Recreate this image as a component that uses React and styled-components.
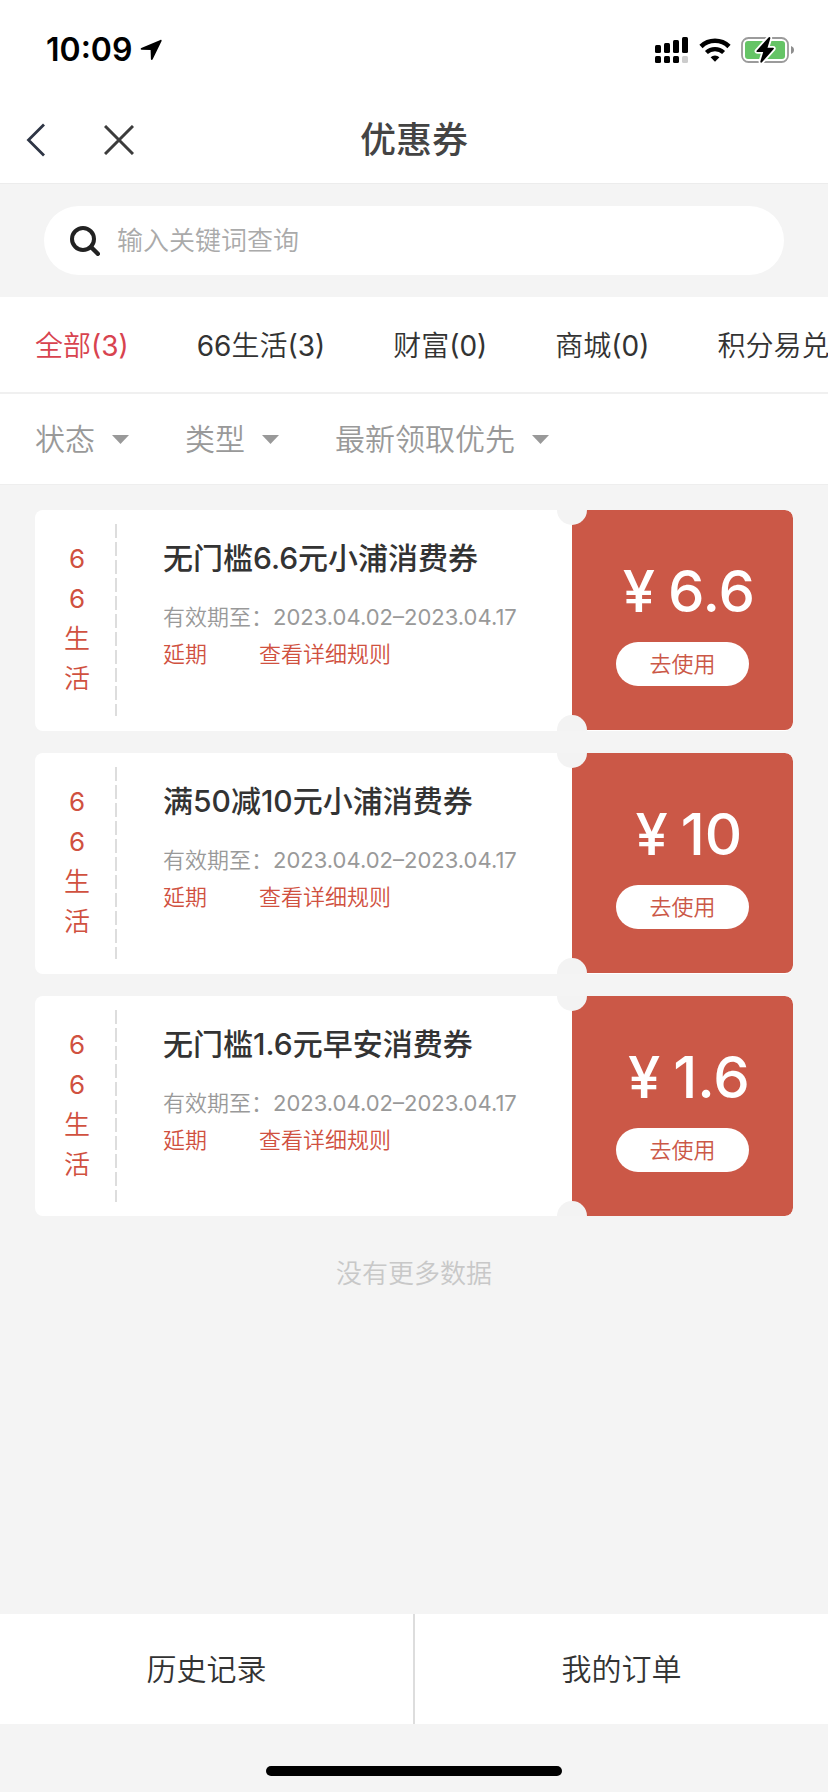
import React from "react";
import styled, { createGlobalStyle } from "styled-components";

const GlobalStyle = createGlobalStyle`
    * {
        box-sizing: border-box;
    }
    body {
        margin: 0;
        background: #f4f4f4;
        color: #333;
        font-family: Inter, "Noto Sans CJK SC DemiLight", "Noto Sans CJK SC", sans-serif;
    }
    button,
    input,
    select {
        margin: 0;
        padding: 0;
        border: 0;
        background: none;
        color: inherit;
        font: inherit;
    }
    button {
        cursor: pointer;
    }
    svg {
        display: block;
        flex: none;
    }
`;

const tabs = ["全部(3)", "66生活(3)", "财富(0)", "商城(0)", "积分易兑"];

const filters = [
    { name: "status", label: "状态" },
    { name: "type", label: "类型" },
    { name: "sort", label: "最新领取优先" },
];

const coupons = [
    { id: 1, title: "无门槛6.6元小浦消费券", amount: "6.6" },
    { id: 2, title: "满50减10元小浦消费券", amount: "10" },
    { id: 3, title: "无门槛1.6元早安消费券", amount: "1.6" },
];

const LocationIcon = () => (
    <svg width="22" height="22" viewBox="0 0 22 22" aria-hidden="true">
        <path
            d="M20.4.9 1.3 9.1c-1 .5-.8 1.6.3 1.7l9 .3.3 9c.1 1.1 1.4 1.2 1.8.2L21.6 2.1c.3-.8-.4-1.5-1.2-1.2z"
            fill="#000"
        />
    </svg>
);

const SignalIcon = () => (
    <svg width="34" height="26" viewBox="0 0 34 26" aria-hidden="true">
        <rect x="0" y="8" width="6" height="8" rx="1.5" />
        <rect x="9" y="6" width="6" height="10" rx="1.5" />
        <rect x="18" y="3" width="6" height="13" rx="1.5" />
        <rect x="27" y="0" width="6" height="16" rx="1.5" />
        <rect x="0" y="19" width="6" height="7" rx="1.5" />
        <rect x="9" y="19" width="6" height="7" rx="1.5" />
        <rect x="18" y="19" width="6" height="7" rx="1.5" />
        <rect x="27" y="19" width="6" height="7" rx="1.5" fill="#ccc" />
    </svg>
);

const WifiIcon = () => (
    <svg width="32" height="24" viewBox="0 0 32 24" aria-hidden="true">
        <path d="M2 8.5a20 20 0 0 1 28 0" fill="none" stroke="#000" strokeWidth="4.6" />
        <path d="M7.4 14.6a12.4 12.4 0 0 1 17.2 0" fill="none" stroke="#000" strokeWidth="4.2" />
        <path d="M11.6 19.3a6.5 6.5 0 0 1 8.8 0L16 23.7z" />
    </svg>
);

const BatteryIcon = () => (
    <svg width="54" height="28" viewBox="0 0 54 28" aria-hidden="true">
        <rect x="1" y="2" width="46" height="24" rx="6.5" fill="none" stroke="#9b9b9b" strokeWidth="1.8" />
        <rect x="4" y="5" width="40" height="18" rx="3" fill="#65c466" />
        <path d="M50 10c2 .7 3 2.2 3 4s-1 3.3-3 4z" fill="#8e8e8e" />
        <path
            d="M27.5 1.5 15.6 14.7c-.5.6-.2 1.2.6 1.2h6L19.4 25.2c-.3 1.5.8 2 1.8.9L32.7 13c.5-.6.2-1.3-.6-1.3h-5.6l2.8-9.2c.3-1.5-.8-2-1.8-1z"
            fill="#000"
            stroke="#fff"
            strokeWidth="3.6"
            paintOrder="stroke"
        />
    </svg>
);

const SearchIcon = () => (
    <svg width="30" height="30" viewBox="0 0 30 30" fill="none" stroke="#222" aria-hidden="true">
        <circle cx="13" cy="13" r="11" strokeWidth="4" />
        <path d="m21 21 6.8 6.8" strokeWidth="4.4" strokeLinecap="round" />
    </svg>
);

const Coupon = ({ title, amount }) => (
    <Card>
        <Category>
            {[..."66生活"].map((char, i) => (
                <span key={i}>{char}</span>
            ))}
        </Category>
        <Perforation />
        <Detail>
            <CouponTitle>{title}</CouponTitle>
            <Validity>有效期至：2023.04.02–2023.04.17</Validity>
            <CardLinks>
                <CardLink href="#extend">延期</CardLink>
                <CardLink href="#rules">查看详细规则</CardLink>
            </CardLinks>
        </Detail>
        <Value>
            <Price>
                <Currency>¥</Currency>
                {amount}
            </Price>
            <UseButton type="button">去使用</UseButton>
            <Notch $edge="top" />
            <Notch $edge="bottom" />
        </Value>
    </Card>
);

const App = () => {
    const [active, setActive] = React.useState(0);

    return (
        <Page>
            <GlobalStyle />
            <StatusBar>
                <Clock>
                    10:09
                    <LocationIcon />
                </Clock>
                <StatusIcons>
                    <SignalIcon />
                    <WifiIcon />
                    <BatteryIcon />
                </StatusIcons>
            </StatusBar>
            <Navbar>
                <NavButtons>
                    <button type="button" aria-label="返回">
                        <svg width="20" height="34" viewBox="0 0 20 34" fill="none" stroke="#2e3545" strokeWidth="2.8">
                            <path d="M18 1.5 2.5 17 18 32.5" />
                        </svg>
                    </button>
                    <button type="button" aria-label="关闭">
                        <svg width="30" height="30" viewBox="0 0 30 30" fill="none" stroke="#3c3c3c" strokeWidth="3">
                            <path d="m1 1 28 28M29 1 1 29" />
                        </svg>
                    </button>
                </NavButtons>
                <NavTitle>优惠券</NavTitle>
            </Navbar>
            <SearchArea>
                <SearchBox>
                    <SearchIcon />
                    <SearchInput type="text" placeholder="输入关键词查询" aria-label="输入关键词查询" />
                </SearchBox>
            </SearchArea>
            <Tabs>
                {tabs.map((tab, i) => (
                    <Tab key={tab} type="button" $active={i === active} onClick={() => setActive(i)}>
                        {tab}
                    </Tab>
                ))}
            </Tabs>
            <Filters>
                {filters.map(({ name, label }) => (
                    <Filter key={name}>
                        <FilterSelect name={name} aria-label={label}>
                            <option>{label}</option>
                        </FilterSelect>
                        <FilterArrow width="17" height="9" viewBox="0 0 17 9" aria-hidden="true">
                            <path d="M0 0h17L8.5 9z" fill="#999" />
                        </FilterArrow>
                    </Filter>
                ))}
            </Filters>
            <CouponList>
                {coupons.map((coupon) => (
                    <Coupon key={coupon.id} {...coupon} />
                ))}
            </CouponList>
            <NoMore>没有更多数据</NoMore>
            <BottomBar>
                <BottomLink href="#history">历史记录</BottomLink>
                <BottomLink href="#orders">我的订单</BottomLink>
            </BottomBar>
            <HomeArea>
                <HomeIndicator />
            </HomeArea>
        </Page>
    );
};

const Page = styled.div`
    display: flex;
    flex-direction: column;
    min-height: 100vh;
    overflow: hidden;
`;

const StatusBar = styled.div`
    display: flex;
    align-items: center;
    justify-content: space-between;
    height: 100px;
    padding: 0 33px 0 46px;
    background: #fff;
    color: #000;
`;

const Clock = styled.div`
    display: flex;
    align-items: center;
    gap: 8px;
    font-size: 32px;
    font-weight: 600;
    line-height: 40px;
`;

const StatusIcons = styled.div`
    display: flex;
    align-items: center;
    gap: 10px;
`;

const Navbar = styled.header`
    display: grid;
    grid-template-columns: 1fr auto 1fr;
    align-items: center;
    height: 84px;
    padding: 0 26px 4px;
    background: #fff;
    border-bottom: 1px solid #ececec;
`;

const NavButtons = styled.div`
    display: flex;
    align-items: center;
    gap: 58px;
`;

const NavTitle = styled.h1`
    margin: 0;
    color: #444;
    font-family: Inter, "Noto Sans CJK SC", sans-serif;
    font-size: 36px;
    font-weight: 500;
    line-height: 52px;
`;

const SearchArea = styled.div`
    padding: 22px 44px;
`;

const SearchBox = styled.div`
    display: flex;
    align-items: center;
    gap: 17px;
    height: 69px;
    padding: 0 26px;
    border-radius: 35px;
    background: #fff;
`;

const SearchInput = styled.input`
    flex: 1;
    min-width: 0;
    height: 40px;
    outline: none;
    font-size: 26px;

    &::placeholder {
        color: #aaa;
    }
`;

const Tabs = styled.nav`
    display: flex;
    gap: 68px;
    height: 97px;
    padding: 0 35px 2px;
    overflow: hidden;
    background: #fff;
    border-bottom: 2px solid #f0f0f0;
`;

const Tab = styled.button`
    flex: none;
    color: ${(props) => (props.$active ? "#d8434f" : "#333")};
    font-size: 28px;
    white-space: nowrap;
`;

const Filters = styled.div`
    display: flex;
    gap: 56px;
    height: 91px;
    padding: 0 35px;
    background: #fff;
    border-bottom: 1px solid #eee;
`;

const Filter = styled.div`
    display: grid;
    align-items: center;
`;

/* the arrow shares the select's grid cell and sits over its right padding */
const FilterSelect = styled.select`
    grid-area: 1 / 1;
    padding-right: 34px;
    appearance: none;
    color: #999;
    font-size: 30px;
    line-height: 44px;
`;

const FilterArrow = styled.svg`
    grid-area: 1 / 1;
    justify-self: end;
    pointer-events: none;
`;

const CouponList = styled.main`
    display: flex;
    flex-direction: column;
    gap: 22px;
    padding: 25px 35px 0;
`;

const Card = styled.article`
    display: flex;
    overflow: hidden;
    border-radius: 8px;
    background: #fff;

    &:not(:last-child) {
        padding-bottom: 1px;
    }
`;

const Category = styled.div`
    display: flex;
    flex-direction: column;
    align-items: center;
    width: 80px;
    padding: 29px 0 31px 4px;
    color: #d0513f;
    font-size: 26px;
    line-height: 40px;
`;

const Perforation = styled.div`
    width: 2px;
    margin: 14px 0;
    background: repeating-linear-gradient(#ddd 0 14px, transparent 14px 18px);
`;

const Detail = styled.div`
    flex: 1;
    min-width: 0;
    padding: 28px 0 0 46px;
`;

const CouponTitle = styled.h2`
    margin: 0 0 21px;
    font-family: Inter, "Noto Sans CJK SC", sans-serif;
    font-size: 30px;
    font-weight: 500;
    line-height: 40px;
    white-space: nowrap;
`;

const Validity = styled.p`
    margin: 0;
    color: #999;
    font-size: 22px;
    line-height: 37px;
    white-space: nowrap;
`;

const CardLinks = styled.div`
    display: flex;
    gap: 52px;
`;

const CardLink = styled.a`
    color: #d0513f;
    font-size: 22px;
    line-height: 37px;
    text-decoration: none;
`;

const Value = styled.div`
    position: relative;
    display: flex;
    flex-direction: column;
    align-items: center;
    width: 221px;
    padding-top: 49px;
    border-radius: 0 8px 8px 0;
    background: #cb5847;
    color: #fff;
`;

const Price = styled.div`
    display: flex;
    margin-bottom: 19px;
    font-size: 58px;
    font-weight: 500;
    line-height: 64px;
`;

const Currency = styled.span`
    width: 58px;
    text-align: center;
`;

const UseButton = styled.button`
    width: 133px;
    height: 44px;
    border-radius: 22px;
    background: #fff;
    color: #cb5847;
    font-size: 22px;
    line-height: 44px;
`;

const Notch = styled.span`
    position: absolute;
    left: -15px;
    ${(props) => props.$edge}: -15px;
    width: 30px;
    height: 30px;
    border-radius: 50%;
    background: #f3f3f3;
`;

const NoMore = styled.p`
    flex: 1;
    margin: 0;
    padding-top: 38px;
    color: #c8c8c8;
    font-size: 26px;
    line-height: 40px;
    text-align: center;
`;

const BottomBar = styled.nav`
    display: flex;
    height: 110px;
    background: #fff;
`;

const BottomLink = styled.a`
    display: flex;
    flex: 1;
    align-items: center;
    justify-content: center;
    padding-bottom: 4px;
    color: #333;
    font-size: 30px;
    text-decoration: none;

    & + & {
        border-left: 2px solid #ddd;
    }
`;

const HomeArea = styled.div`
    display: flex;
    align-items: flex-end;
    justify-content: center;
    height: 68px;
    padding-bottom: 16px;
`;

const HomeIndicator = styled.div`
    width: 296px;
    height: 10px;
    border-radius: 5px;
    background: #000;
`;

export default App;
